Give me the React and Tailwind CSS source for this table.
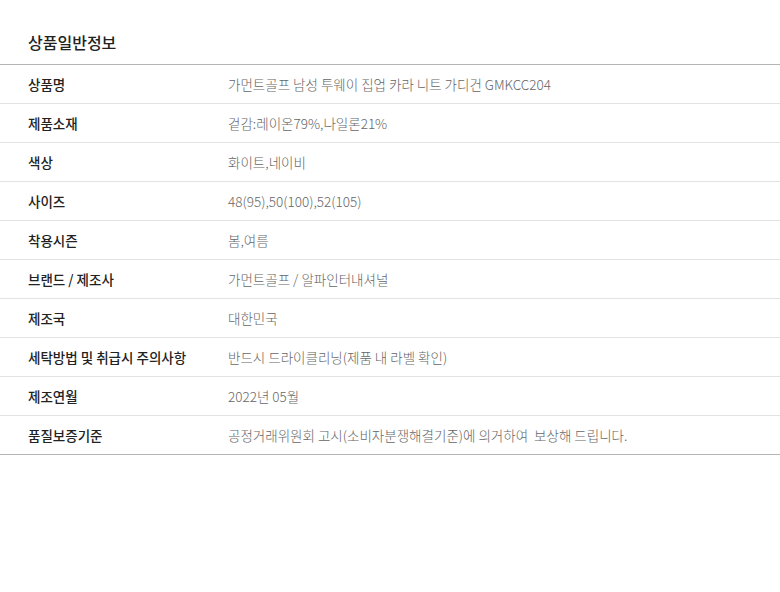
const rows = [
    ['상품명', '가먼트골프 남성 투웨이 집업 카라 니트 가디건 GMKCC204'],
    ['제품소재', '겉감:레이온79%,나일론21%'],
    ['색상', '화이트,네이비'],
    ['사이즈', '48(95),50(100),52(105)'],
    ['착용시즌', '봄,여름'],
    ['브랜드 / 제조사', '가먼트골프 / 알파인터내셔널'],
    ['제조국', '대한민국'],
    ['세탁방법 및 취급시 주의사항', '반드시 드라이클리닝(제품 내 라벨 확인)'],
    ['제조연월', '2022년 05월'],
    ['품질보증기준', '공정거래위원회 고시(소비자분쟁해결기준)에 의거하여  보상해 드립니다.'],
];

const App = () => {
    return (
        <div className="w-[780px] h-[592px] bg-white font-['Noto_Sans_CJK_KR','Noto_Sans',sans-serif]">
            <div className="h-16 px-7 pt-[30px]">
                <h2 className="text-base leading-6 font-medium text-[#222]">상품일반정보</h2>
            </div>
            <div className="border-t border-[#b5b5b5]">
                {rows.map(([label, value], i) => (
                    <div
                        key={i}
                        className={`flex items-center h-[39px] text-[13.5px] border-b ${i < rows.length - 1 ? 'border-[#e3e3e3]' : 'border-[#b5b5b5]'}`}
                    >
                        <div className="w-[228px] pl-7 font-medium text-[#222] whitespace-nowrap">{label}</div>
                        <div className="flex-1 text-[#666] font-light whitespace-pre">{value}</div>
                    </div>
                ))}
            </div>
        </div>
    );
};

export default App;
